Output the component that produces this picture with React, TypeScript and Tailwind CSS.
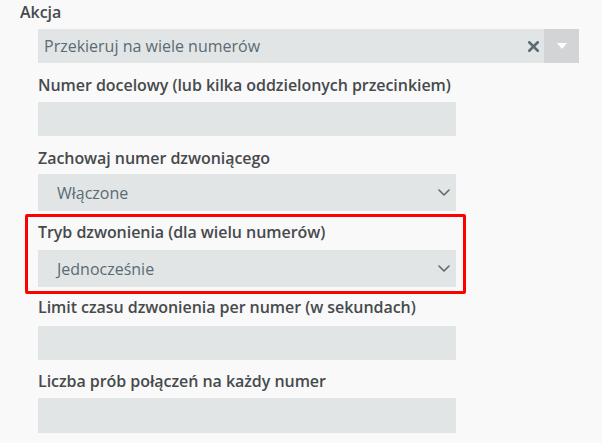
import { X } from "lucide-react"

const font = { fontFamily: '"Open Sans", "Noto Sans", sans-serif' }

function Label({ children, className = "" }: { children: React.ReactNode; className?: string }) {
  return (
    <div className={`h-[22px] text-[16px] leading-[22px] font-semibold tracking-[-0.05px] text-[#464a4d] whitespace-nowrap ${className}`}>
      {children}
    </div>
  )
}

function Chevron() {
  return (
    <svg width="12" height="7" viewBox="0 0 12 7" className="shrink-0">
      <path d="M1 1l5 5 5-5" fill="none" stroke="#5b6b73" strokeWidth="1.6" strokeLinecap="round" strokeLinejoin="round" />
    </svg>
  )
}

function SelectBox({ value, className = "" }: { value: string; className?: string }) {
  return (
    <div className={`flex h-[37px] w-[418px] items-center justify-between bg-[#e2e5e6] pl-[19px] pr-[6px] ${className}`}>
      <span className="text-[16px] text-[#5b6b73]">{value}</span>
      <Chevron />
    </div>
  )
}

function InputBox({ className = "" }: { className?: string }) {
  return <div className={`h-[34px] w-[418px] bg-[#e2e5e6] ${className}`} />
}

export default function App() {
  return (
    <div className="min-h-screen w-full bg-[#f9f9f9] pt-[1px]" style={font}>
      <Label className="ml-[20px]">Akcja</Label>

      <div className="ml-[38px] mt-[6px] flex h-[34px] w-[541px] items-center bg-[#e2e5e6]">
        <span className="flex-1 pl-[6px] text-[16px] text-[#5b6b73]">Przekieruj na wiele numerów</span>
        <X className="mr-[2px] h-[17px] w-[17px] text-[#5b6b73]" strokeWidth={3.6} />
        <div className="flex h-full w-[35px] items-center justify-center bg-[#d2d4d5]">
          <svg width="10" height="6" viewBox="0 0 10 6">
            <path d="M0 0h10L5 6z" fill="#ffffff" />
          </svg>
        </div>
      </div>

      <Label className="ml-[38px] mt-[11px]">Numer docelowy (lub kilka oddzielonych przecinkiem)</Label>
      <InputBox className="ml-[38px] mt-[6px]" />

      <Label className="ml-[38px] mt-[11px]">Zachowaj numer dzwoniącego</Label>
      <SelectBox value="Włączone" className="ml-[38px] mt-[5px]" />

      <div className="ml-[25px] mt-[3px] w-[441px] rounded-[2px] border-[3px] border-[#f00] pb-[4px] pl-[10px] pr-[7px] pt-[4px]">
        <Label>Tryb dzwonienia (dla wielu numerów)</Label>
        <SelectBox value="Jednocześnie" className="mt-[7px]" />
      </div>

      <Label className="ml-[38px] mt-[2px]">Limit czasu dzwonienia per numer (w sekundach)</Label>
      <InputBox className="ml-[38px] mt-[8px]" />

      <Label className="ml-[38px] mt-[10px]">Liczba prób połączeń na każdy numer</Label>
      <InputBox className="ml-[38px] mt-[6px] h-[35px]" />
    </div>
  )
}
